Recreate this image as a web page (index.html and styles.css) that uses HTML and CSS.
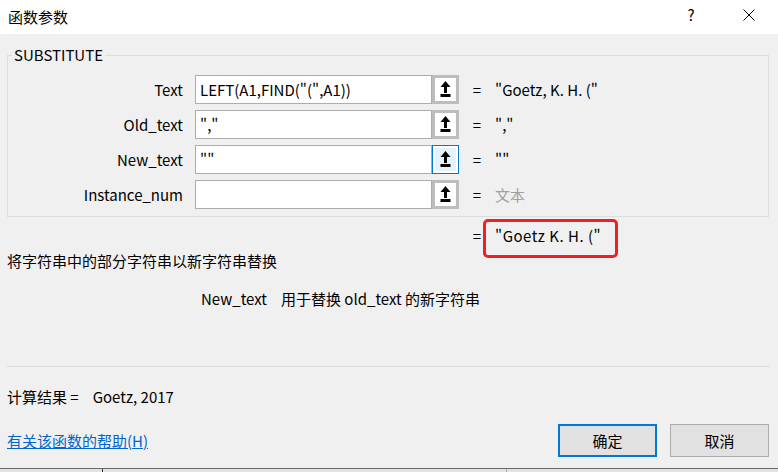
FILE: index.html
```html
<!DOCTYPE html>
<html lang="zh-CN">
<head>
<meta charset="utf-8">
<title>函数参数</title>
<link rel="stylesheet" href="styles.css">
</head>
<body>
<div class="dialog">
  <div class="titlebar">
    <span class="title">函数参数</span>
    <span class="help">?</span>
    <span class="close">
      <svg width="12" height="12" viewBox="0 0 12 12"><path d="M0.5 0.5 L11.5 11.5 M11.5 0.5 L0.5 11.5" stroke="#000" stroke-width="1" fill="none"/></svg>
    </span>
  </div>
  <div class="body">
    <fieldset class="group">
      <legend class="group-title">SUBSTITUTE</legend>
      <div class="arg">
        <span class="arg-name">Text</span>
        <span class="arg-input">LEFT(A1,FIND("(",A1))</span>
        <span class="ref-btn"><svg width="11" height="17" viewBox="0 0 11 17"><path d="M5.5 0 L10.5 6 L7 6 L7 12 L4 12 L4 6 L0.5 6 Z" fill="#000"/><rect x="0.5" y="13" width="10" height="3" fill="#000"/></svg></span>
        <span class="eq">=</span>
        <span class="arg-val">"Goetz, K. H. ("</span>
      </div>
      <div class="arg">
        <span class="arg-name">Old_text</span>
        <span class="arg-input">","</span>
        <span class="ref-btn"><svg width="11" height="17" viewBox="0 0 11 17"><path d="M5.5 0 L10.5 6 L7 6 L7 12 L4 12 L4 6 L0.5 6 Z" fill="#000"/><rect x="0.5" y="13" width="10" height="3" fill="#000"/></svg></span>
        <span class="eq">=</span>
        <span class="arg-val">","</span>
      </div>
      <div class="arg">
        <span class="arg-name">New_text</span>
        <span class="arg-input">""</span>
        <span class="ref-btn focused"><svg width="11" height="17" viewBox="0 0 11 17"><path d="M5.5 0 L10.5 6 L7 6 L7 12 L4 12 L4 6 L0.5 6 Z" fill="#000"/><rect x="0.5" y="13" width="10" height="3" fill="#000"/></svg></span>
        <span class="eq">=</span>
        <span class="arg-val">""</span>
      </div>
      <div class="arg">
        <span class="arg-name">Instance_num</span>
        <span class="arg-input"></span>
        <span class="ref-btn"><svg width="11" height="17" viewBox="0 0 11 17"><path d="M5.5 0 L10.5 6 L7 6 L7 12 L4 12 L4 6 L0.5 6 Z" fill="#000"/><rect x="0.5" y="13" width="10" height="3" fill="#000"/></svg></span>
        <span class="eq">=</span>
        <span class="arg-val hint">文本</span>
      </div>
    </fieldset>
    <div class="result">
      <span class="eq">=</span>
      <span class="result-val">"Goetz K. H. ("</span>
    </div>
    <p class="desc">将字符串中的部分字符串以新字符串替换</p>
    <p class="arg-desc"><span class="arg-desc-name">New_text</span>用于替换 old_text 的新字符串</p>
    <div class="sep"></div>
    <div class="calc"><span>计算结果 =</span><span class="calc-val">Goetz, 2017</span></div>
    <div class="footer">
      <a class="help-link" href="#">有关该函数的帮助(H)</a>
      <div class="buttons">
        <button class="btn primary">确定</button>
        <button class="btn">取消</button>
      </div>
    </div>
  </div>
  <div class="strip"><span class="tick t1"></span><span class="tick t2"></span></div>
</div>
</body>
</html>
```

FILE: styles.css
```css
* { box-sizing: border-box; }
html, body { margin: 0; padding: 0; }
body {
  width: 778px;
  height: 472px;
  overflow: hidden;
  font-family: "Noto Sans CJK SC", "Noto Sans", sans-serif;
  font-size: 15px;
  color: #000;
  background: #f0f0f0;
}
.dialog { width: 778px; height: 472px; display: flex; flex-direction: column; }

.titlebar {
  height: 34px;
  flex: none;
  background: #fff;
  display: flex;
  align-items: center;
  padding-left: 8px;
}
.title { font-size: 15px; line-height: 20px; }
.help { margin-left: auto; width: 46px; text-align: center; font-size: 15px; line-height: 20px; margin-top: -4px; margin-right: 12px; }
.close { width: 46px; display: flex; justify-content: center; margin-right: 6px; margin-top: -4px; }

.body {
  height: 434px;
  flex: none;
  padding: 0 9px 0 7px;
  display: flex;
  flex-direction: column;
}

.group {
  margin: 11px 0 0 0;
  padding: 10px 0 7px 0;
  border: 1px solid #dcdcdc;
  min-width: 0;
  display: flex;
  flex-direction: column;
  gap: 6px;
}
.group-title {
  margin-left: 4px;
  padding: 0 2px;
  line-height: 20px;
  font-size: 15px;
}

.arg { display: flex; align-items: center; height: 29px; }
.arg-name { width: 175px; text-align: right; margin-right: 12px; line-height: 20px; }
.arg-input {
  width: 237px;
  height: 29px;
  background: #fff;
  border: 1px solid #adadad;
  padding: 0 4px;
  line-height: 27px;
  white-space: nowrap;
}
.ref-btn {
  width: 27px;
  height: 29px;
  border: 3px solid #bdbdbd;
  background: #fff;
  display: flex;
  align-items: center;
  justify-content: center;
}
.ref-btn.focused {
  border: 1px solid #0078d7;
  background: #e5f1fb;
  box-shadow: inset 0 0 0 2px #fff;
}
.eq { width: 36px; text-align: center; line-height: 20px; }
.arg-val { line-height: 20px; white-space: pre; }
.hint { color: #a0a0a0; }

.result {
  margin-top: 9px;
  height: 20px;
  flex: none;
  display: flex;
  align-items: flex-start;
  line-height: 20px;
  padding-left: 452px;
}
.result-val {
  margin-left: -12px;
  margin-top: -7px;
  height: 39px;
  border: 3px solid #f02020;
  border-radius: 5px;
  padding: 4px 14px 9px 9px;
  letter-spacing: 0.5px;
}

.desc { margin: 5px 0 0 0; line-height: 20px; }
.arg-desc { margin: 18px 0 0 0; padding-left: 194px; line-height: 20px; }
.arg-desc-name { margin-right: 14px; }

.sep { margin-top: 57px; height: 1px; flex: none; background: #dcdcdc; margin-right: -1px; }

.calc { margin-top: 20px; line-height: 20px; }
.calc-val { margin-left: 14px; }

.footer {
  margin-top: 17px;
  display: flex;
  align-items: center;
}
.help-link { color: #0066cc; text-decoration: underline; line-height: 20px; }
.buttons { margin-left: auto; display: flex; gap: 13px; }
.btn {
  width: 99px;
  height: 33px;
  font-family: inherit;
  font-size: 15px;
  color: #000;
  background: #e1e1e1;
  border: 1px solid #adadad;
  padding: 0;
}
.btn.primary { border: 2px solid #0078d7; }

.strip {
  height: 4px;
  flex: none;
  border-top: 1px solid #6a6a6a;
  background: #e3e3e3;
  display: flex;
}
.tick { width: 1px; height: 3px; background: #333; }
.t1 { margin-left: 102px; }
.t2 { margin-left: 403px; background: #aaa; }
```
